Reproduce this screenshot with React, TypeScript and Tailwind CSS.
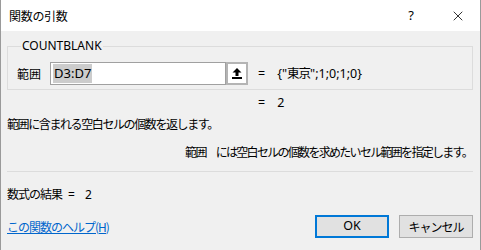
import { X } from 'lucide-react';

const ui = { fontFamily: '"Noto Sans", "Noto Sans CJK JP", sans-serif' };
const jp = { fontFamily: '"Noto Sans CJK JP", sans-serif' };

// ── Collapse (RefEdit) button icon ────────────────────────
function CollapseIcon() {
  return (
    <svg width="10" height="11" viewBox="0 0 10 11">
      <path d="M5 0 L9.5 4.5 L6.5 4.5 L6.5 8 L3.5 8 L3.5 4.5 L0.5 4.5 Z" fill="#000" />
      <rect x="0" y="9" width="10" height="2" fill="#000" />
    </svg>
  );
}

export default function App() {
  return (
    <div
      className="w-[481px] h-[250px] bg-[#f0f0f0] border-x border-[#9a9a9a] flex flex-col text-black overflow-hidden"
      style={ui}
    >
      {/* Title bar */}
      <div className="h-[31px] bg-white flex items-center pl-[8px] shrink-0">
        <span className="text-[12px] tracking-[-0.3px]" style={jp}>関数の引数</span>
        <span className="ml-auto text-[13px] mr-[36px]">?</span>
        <X size={16} strokeWidth={1.2} className="mr-[14px]" />
      </div>

      {/* Body */}
      <div className="flex flex-col pl-[6px] pr-[7px] pt-[7px]">
        <fieldset className="border border-[#dcdcdc] pl-[9px] pt-[8px] pb-[4px]">
          <legend className="ml-[4px] px-[1px] text-[12px] leading-[16px]">COUNTBLANK</legend>
          <div className="flex items-center h-[23px]">
            <span className="w-[33px] text-[12px]" style={jp}>範囲</span>
            <div className="w-[176px] h-[23px] border border-[#a0a0a0] bg-white flex items-center pl-[2px]">
              <span className="bg-[#cccccc] text-[13px] leading-[19px] px-[1px]">D3:D7</span>
            </div>
            <div className="w-[22px] h-[23px] border-2 border-[#b4b4b4] bg-white flex items-center justify-center">
              <CollapseIcon />
            </div>
            <span className="ml-[10px] text-[12.5px] whitespace-nowrap">
              =<span className="inline-block w-[12px]" />{'{"'}<span style={jp} className="tracking-[-1px]">東京</span>{'";1;0;1;0}'}
            </span>
          </div>
        </fieldset>

        <div className="ml-[251px] mt-[5px] h-[16px] leading-[16px] text-[12.5px] whitespace-nowrap">
          =<span className="inline-block w-[12px]" />2
        </div>

        <p className="mt-[5px] h-[16px] leading-[16px] text-[12px] tracking-[-1.4px] whitespace-nowrap" style={jp}>
          範囲に含まれる空白セルの個数を返します。
        </p>

        <p
          className="mt-[12px] h-[16px] leading-[16px] text-[12px] tracking-[-1.7px] whitespace-nowrap flex justify-end pr-[1px]"
          style={jp}
        >
          <span>範囲</span>
          <span className="inline-block w-[10px]" />
          <span>には空白セルの個数を求めたいセル範囲を指定します。</span>
        </p>

        <div className="mt-[11px] h-px bg-[#dcdcdc]" />

        <p className="mt-[14px] h-[16px] leading-[16px] text-[12px] whitespace-nowrap">
          <span style={jp} className="tracking-[-1px]">数式の結果</span>
          <span className="ml-[6px]">=</span>
          <span className="ml-[10px]">2</span>
        </p>

        {/* Footer */}
        <div className="mt-[13px] flex items-center">
          <a className="text-[12px] text-[#0066cc] underline tracking-[-1px] whitespace-nowrap" style={jp}>
            この関数のヘルプ(H)
          </a>
          <button className="ml-auto w-[74px] h-[23px] border-2 border-[#0078d7] bg-[#e1e1e1] text-[12.5px]">
            OK
          </button>
          <button
            className="ml-[10px] w-[74px] h-[23px] border border-[#adadad] bg-[#e1e1e1] text-[12px] tracking-[-1px]"
            style={jp}
          >
            キャンセル
          </button>
        </div>
      </div>
    </div>
  );
}
